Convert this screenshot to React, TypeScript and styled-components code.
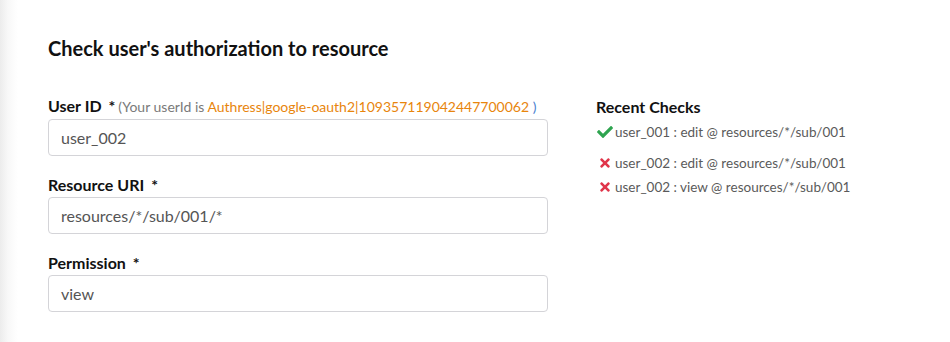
import React from "react";
import styled, { createGlobalStyle } from "styled-components";
import { FaCheck, FaTimes } from "react-icons/fa";

const GlobalStyle = createGlobalStyle`
  html, body { margin: 0; padding: 0; background: #ffffff; }
  body { font-family: Lato, "Noto Sans", sans-serif; }
`;

const Page = styled.div`
  width: 950px;
  height: 342px;
  box-sizing: border-box;
  background: linear-gradient(to right, #ececec 0px, #f8f8f8 8px, #ffffff 18px);
  padding: 35px 0 0 48px;
  color: #1a1a1a;
`;

const Title = styled.h2`
  margin: 0 0 35px 0;
  font-size: 20px;
  line-height: 26px;
  font-weight: 700;
  color: #111;
`;

const Columns = styled.div`
  display: flex;
  gap: 48px;
`;

const Form = styled.div`
  width: 500px;
  display: flex;
  flex-direction: column;
  gap: 19px;
`;

const Field = styled.div`
  display: flex;
  flex-direction: column;
  gap: 2px;
`;

const Label = styled.label`
  font-size: 16px;
  line-height: 20px;
  font-weight: 700;
  color: #111;
`;

const Star = styled.span`
  margin-left: 7px;
`;

const Hint = styled.span`
  font-size: 14px;
  font-weight: 400;
  color: #7a7a7a;
  margin-left: 3px;
`;

const Highlight = styled.span<{ $color: string }>`
  color: ${(p) => p.$color};
`;

const Input = styled.div`
  height: 37px;
  box-sizing: border-box;
  border: 1px solid #d4d4d8;
  border-radius: 4px;
  padding: 0 12px;
  display: flex;
  align-items: center;
  font-size: 16px;
  color: #555;
  background: #fff;
`;

const Side = styled.div`
  display: flex;
  flex-direction: column;
  padding-top: 1px;
`;

const SideTitle = styled.div`
  font-size: 16px;
  line-height: 20px;
  font-weight: 700;
  color: #111;
  margin-bottom: 6px;
`;

const CheckItem = styled.div<{ $gap: number }>`
  display: flex;
  align-items: center;
  font-size: 13.5px;
  font-weight: 400;
  line-height: 18px;
  color: #5a5a5a;
  margin-bottom: ${(p) => p.$gap}px;
`;

const Icon = styled.span<{ $color: string; $w: number }>`
  display: inline-flex;
  width: ${(p) => p.$w}px;
  justify-content: center;
  color: ${(p) => p.$color};
  margin-right: 2px;
`;

const checks = [
  { ok: true, text: "user_001 : edit @ resources/*/sub/001", gap: 13 },
  { ok: false, text: "user_002 : edit @ resources/*/sub/001", gap: 6 },
  { ok: false, text: "user_002 : view @ resources/*/sub/001", gap: 0 },
];

export default function App() {
  return (
    <>
      <GlobalStyle />
      <Page>
        <Title>Check user's authorization to resource</Title>
        <Columns>
          <Form>
            <Field>
              <Label>
                User ID<Star>*</Star>
                <Hint>
                  (Your userId is{" "}
                  <Highlight $color="#e8850c">
                    Authress|google-oauth2|109357119042447700062
                  </Highlight>{" "}
                  <Highlight $color="#4a7fd0">)</Highlight>
                </Hint>
              </Label>
              <Input>user_002</Input>
            </Field>
            <Field>
              <Label>
                Resource URI<Star>*</Star>
              </Label>
              <Input>resources/*/sub/001/*</Input>
            </Field>
            <Field>
              <Label>
                Permission<Star>*</Star>
              </Label>
              <Input>view</Input>
            </Field>
          </Form>
          <Side>
            <SideTitle>Recent Checks</SideTitle>
            {checks.map((c, i) => (
              <CheckItem key={i} $gap={c.gap}>
                {c.ok ? (
                  <Icon $color="#2ea44f" $w={17}>
                    <FaCheck size={16} />
                  </Icon>
                ) : (
                  <Icon $color="#e0354a" $w={17}>
                    <FaTimes size={14} />
                  </Icon>
                )}
                {c.text}
              </CheckItem>
            ))}
          </Side>
        </Columns>
      </Page>
    </>
  );
}
